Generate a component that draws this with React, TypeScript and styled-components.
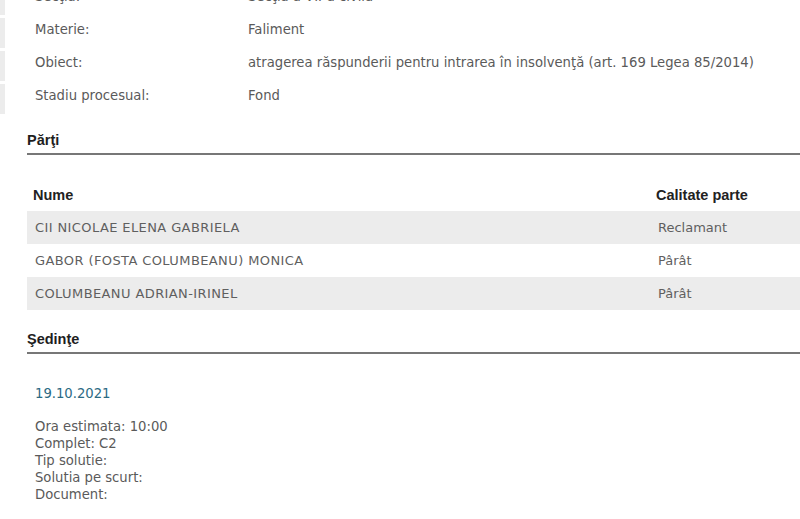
import { Fragment } from 'react';
import styled, { createGlobalStyle } from 'styled-components';

const GlobalStyle = createGlobalStyle`
  html, body {
    margin: 0;
    padding: 0;
    background: #fff;
  }
  body {
    width: 800px;
    height: 519px;
    overflow: hidden;
    font-family: "DejaVu Sans", Verdana, sans-serif;
  }
`;

const Page = styled.div`
  width: 800px;
  margin-top: -15px;
`;

const InfoTable = styled.div`
  display: grid;
  grid-template-columns: 5px 183px 1fr;
  row-gap: 3px;
  column-gap: 30px;
`;

const Strip = styled.div`
  background: #ececec;
  height: 30px;
`;

const InfoCell = styled.div`
  font-size: 13.2px;
  line-height: 15px;
  color: #5a5a5a;
  padding-top: 4px;
  white-space: nowrap;
`;

const Section = styled.section<{ $gap: number }>`
  padding: 0 0 0 27px;
  margin-top: ${(p) => p.$gap}px;
`;

const SectionTitle = styled.h3`
  margin: 0;
  font-family: "Liberation Sans", Arial, sans-serif;
  font-size: 14.5px;
  line-height: 17px;
  font-weight: 700;
  color: #1e1e1e;
  padding-bottom: 4px;
  border-bottom: 2px solid #777;
`;

const Table = styled.div`
  margin-top: 23px;
  display: flex;
  flex-direction: column;
`;

const Row = styled.div<{ $striped?: boolean }>`
  display: grid;
  grid-template-columns: 623px 1fr;
  height: 33px;
  align-items: center;
  background: ${(p) => (p.$striped ? '#ececec' : 'transparent')};
`;

const HeadCell = styled.div`
  font-family: "Liberation Sans", Arial, sans-serif;
  font-size: 14.5px;
  font-weight: 700;
  color: #222;
  padding-left: 6px;
`;

const Cell = styled.div<{ $caps?: boolean }>`
  font-size: 13px;
  color: #5f5f5f;
  padding-left: 8px;
  white-space: nowrap;
  letter-spacing: ${(p) => (p.$caps ? '0.4px' : '0')};
`;

const Hearing = styled.div`
  padding: 31px 0 0 8px;
  font-size: 13.2px;
  color: #5a5a5a;
`;

const HearingDate = styled.div`
  color: #2b6a83;
  line-height: 17px;
  margin-bottom: 16px;
`;

const DetailLine = styled.div`
  line-height: 17px;
`;

const info: [string, string][] = [
  ['Secţia:', 'Secţia a VII-a civilă'],
  ['Materie:', 'Faliment'],
  ['Obiect:', 'atragerea răspunderii pentru intrarea în insolvenţă (art. 169 Legea 85/2014)'],
  ['Stadiu procesual:', 'Fond'],
];

const parti: [string, string][] = [
  ['CII NICOLAE ELENA GABRIELA', 'Reclamant'],
  ['GABOR (FOSTA COLUMBEANU) MONICA', 'Pârât'],
  ['COLUMBEANU ADRIAN-IRINEL', 'Pârât'],
];

const details = ['Ora estimata: 10:00', 'Complet: C2', 'Tip solutie:', 'Solutia pe scurt:', 'Document:'];

export default function App() {
  return (
    <>
      <GlobalStyle />
      <Page>
        <InfoTable>
          {info.map(([label, value]) => (
            <Fragment key={label}>
              <Strip />
              <InfoCell>{label}</InfoCell>
              <InfoCell>{value}</InfoCell>
            </Fragment>
          ))}
        </InfoTable>
        <Section $gap={18}>
          <SectionTitle>Părţi</SectionTitle>
          <Table>
            <Row>
              <HeadCell>Nume</HeadCell>
              <HeadCell>Calitate parte</HeadCell>
            </Row>
            {parti.map(([name, role], i) => (
              <Row key={name} $striped={i % 2 === 0}>
                <Cell $caps>{name}</Cell>
                <Cell>{role}</Cell>
              </Row>
            ))}
          </Table>
        </Section>
        <Section $gap={21}>
          <SectionTitle>Şedinţe</SectionTitle>
          <Hearing>
            <HearingDate>19.10.2021</HearingDate>
            {details.map((d) => (
              <DetailLine key={d}>{d}</DetailLine>
            ))}
          </Hearing>
        </Section>
      </Page>
    </>
  );
}
